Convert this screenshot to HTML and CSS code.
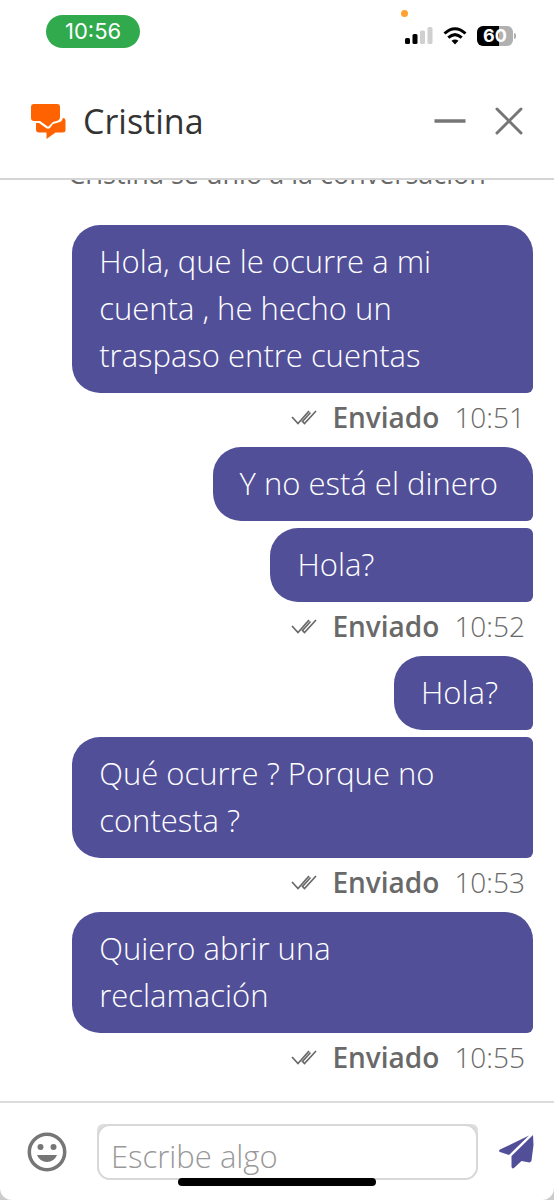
FILE: index.html
```html
<!DOCTYPE html>
<html lang="es">
<head>
<meta charset="utf-8">
<meta name="viewport" content="width=device-width, initial-scale=1">
<title>Chat con Cristina</title>
<link rel="stylesheet" href="styles.css">
</head>
<body>
<svg class="defs" aria-hidden="true"><defs>
  <symbol id="sent" viewBox="0 0 26 18"><path d="M1 9L7 15.500L18 3M25 3L13.500 15.500L11.500 13.500L19.500 4.500" fill="none" stroke="currentColor" stroke-width="1.700"/></symbol>
</defs></svg>
<div class="status-bar">
  <time class="clock">10:56</time>
  <div class="indicators">
    <span class="privacy-dot"></span>
    <svg width="28" height="18" viewBox="0 0 28 18" role="img" aria-label="Cobertura"><rect x="0" y="11" width="5" height="6" rx="1.5"/><rect x="7.500" y="7" width="5" height="10" rx="1.500"/><rect x="15" y="3.500" width="5" height="13.500" rx="1.500" fill="#d0d0d0"/><rect x="22.500" y="0" width="5" height="17" rx="1.500" fill="#d0d0d0"/></svg>
    <svg width="24" height="18" viewBox="0 0 24 18" role="img" aria-label="Wi-Fi"><g fill="none" stroke="#000" stroke-width="3"><path d="M1.500 6.500Q12-3 22.500 6.500"/><path d="M5.300 10.700Q12 4.600 18.700 10.700"/></g><path d="M8.500 13.800Q12 11 15.500 13.800L12 17.500z"/></svg>
    <span class="battery">60</span>
  </div>
</div>
<main class="chat">
  <header class="header">
    <svg width="36" height="36" viewBox="0 0 36 36" fill="#ff6200" aria-hidden="true"><path d="M4 1h23q3 0 3 3v10q0 3-2 3.500L23 19l-4 4q-1 1-2 0l-7-5H4q-3 0-3-3V4q0-3 3-3z"/><path d="M6 20h3l7 5q2 1.500 4 0l3-4 7-2q2-1 3-4 2.500 0 2.500 3v9q0 2.500-3 2.500h-7l-9 6.500v-6.500H9q-3 0-3-3z"/></svg>
    <h1 class="name">Cristina</h1>
    <button class="icon-button" aria-label="Minimizar"><svg width="32" height="32" viewBox="0 0 32 32"><path d="M0.500 16h31" stroke="#767676" stroke-width="3.500"/></svg></button>
    <button class="icon-button" aria-label="Cerrar"><svg width="32" height="32" viewBox="0 0 32 32"><path d="M4 4l24 24M28 4L4 28" stroke="#767676" stroke-width="3" stroke-linecap="round"/></svg></button>
  </header>
  <section class="messages" aria-label="Mensajes">
    <p class="notice">Cristina se unió a la conversación</p>
    <div class="group wide">
      <p class="bubble">Hola, que le ocurre a mi<br>cuenta , he hecho un<br>traspaso entre cuentas</p>
      <p class="receipt"><svg width="26" height="18"><use href="#sent"/></svg><strong>Enviado</strong><time>10:51</time></p>
    </div>
    <div class="group"><p class="bubble">Y no está el dinero</p></div>
    <div class="group">
      <p class="bubble joined">Hola?</p>
      <p class="receipt"><svg width="26" height="18"><use href="#sent"/></svg><strong>Enviado</strong><time>10:52</time></p>
    </div>
    <div class="group"><p class="bubble">Hola?</p></div>
    <div class="group wide">
      <p class="bubble joined">Qué ocurre ? Porque no<br>contesta ?</p>
      <p class="receipt"><svg width="26" height="18"><use href="#sent"/></svg><strong>Enviado</strong><time>10:53</time></p>
    </div>
    <div class="group wide">
      <p class="bubble">Quiero abrir una<br>reclamación</p>
      <p class="receipt"><svg width="26" height="18"><use href="#sent"/></svg><strong>Enviado</strong><time>10:55</time></p>
    </div>
  </section>
  <form class="composer">
    <button class="icon-button" type="button" aria-label="Emojis"><svg width="40" height="40" viewBox="0 0 40 40" fill="#767676"><circle cx="20" cy="20" r="17.700" fill="none" stroke="#767676" stroke-width="3.500"/><circle cx="13.500" cy="15" r="3"/><circle cx="26.500" cy="15" r="3"/><path d="M10 23h20q-3 7-10 7t-10-7z"/></svg></button>
    <div class="field-frame"><input class="field" type="text" placeholder="Escribe algo" aria-label="Mensaje"></div>
    <button class="icon-button" type="submit" aria-label="Enviar"><svg width="36" height="34" viewBox="0 0 36 34" fill="#524f99"><path d="M31 .5L2 14.500q-2 1.500 0 2.500l9 3z"/><path d="M35 0L13.500 21v11q1 2.500 3 .5l7-6.500 8 1.500q1.500-.5 2-2L35.500 10z"/></svg></button>
  </form>
</main>
<div class="home-indicator"></div>
</body>
</html>
```
FILE: styles.css
```css
* { box-sizing: border-box; }
body {
  margin: 0;
  height: 100vh;
  display: flex;
  flex-direction: column;
  background: #ccc;
  color: #333;
  font-family: "Open Sans", "Noto Sans", sans-serif;
}
p, h1 { margin: 0; }
svg { display: block; flex: none; }
.defs { position: absolute; width: 0; height: 0; }
.status-bar {
  flex: none;
  height: 68px;
  padding: 15px 41px 0 46px;
  display: flex;
  justify-content: space-between;
  align-items: flex-start;
  background: #fff;
}
.clock {
  padding: 0 19px;
  border-radius: 17px;
  background: #30aa4d;
  color: #fff;
  font: 400 22px/33px Inter, sans-serif;
}
.indicators {
  position: relative;
  display: flex;
  align-items: center;
  gap: 10px;
  padding-top: 11px;
}
.privacy-dot {
  position: absolute;
  left: -4px;
  top: -5px;
  width: 7px;
  height: 7px;
  border-radius: 50%;
  background: #ffa230;
}
.battery {
  position: relative;
  width: 36px;
  border-radius: 6px;
  background: linear-gradient(90deg, #000 60%, #b0b0b0 60%);
  color: #fff;
  font: 700 18px/20px Inter, sans-serif;
  text-align: center;
}
.battery::after {
  content: "";
  position: absolute;
  left: 37px;
  top: 7px;
  width: 2px;
  height: 6px;
  border-radius: 0 2px 2px 0;
  background: #b0b0b0;
}
.chat {
  flex: 1;
  min-height: 0;
  display: flex;
  flex-direction: column;
  border-radius: 0 0 12px 12px;
  background: #fff;
}
.header {
  flex: none;
  height: 112px;
  padding: 0 29px 4px 30px;
  display: flex;
  align-items: center;
  border-bottom: 2px solid #d5d5d5;
}
.name {
  flex: 1;
  padding-left: 17px;
  font: 500 34px/44px "Open Sans", sans-serif;
}
.icon-button {
  padding: 0;
  border: 0;
  background: none;
}
.icon-button + .icon-button { margin-left: 27px; }
.messages {
  flex: 1;
  min-height: 0;
  overflow: hidden;
  display: flex;
  flex-direction: column;
  justify-content: flex-end;
  align-items: flex-end;
  gap: 7px;
  padding: 0 21px 21px;
}
.notice {
  align-self: center;
  padding-bottom: 26px;
  color: #696969;
  font-size: 27px;
  font-weight: 400;
  line-height: 36px;
}
.group { max-width: 90%; }
.group.wide { width: 90%; }
.bubble {
  padding: 13px 35px 14px 27px;
  border-radius: 28px 28px 6px 28px;
  background: #524f99;
  color: #fff;
  font-size: 31px;
  font-weight: 300;
  line-height: 47px;
}
.bubble.joined { border-top-right-radius: 6px; }
.receipt {
  display: flex;
  justify-content: flex-end;
  align-items: center;
  height: 47px;
  padding: 0 8px 0 21px;
  color: #696969;
  font-size: 28px;
}
.receipt strong { padding: 0 15px; font-weight: 600; }
.receipt time { font-weight: 300; }
.composer {
  flex: none;
  height: 99px;
  padding: 20px 20px 20px 27px;
  display: flex;
  align-items: center;
  border-top: 2px solid #dcdcdc;
}
.field-frame {
  flex: 1;
  min-width: 0;
  height: 56px;
  margin: 0 20px 0 30px;
  border-radius: 6px 6px 14px 14px;
  background: #dedede;
}
.field {
  display: block;
  width: 100%;
  height: 100%;
  padding: 8px 12px 0;
  border: 2px solid #d8d8d8;
  border-radius: 13px;
  background: #fff;
  font: 300 31px/40px "Open Sans", sans-serif;
}
.field::placeholder { color: #999; }
.home-indicator {
  position: absolute;
  left: 50%;
  bottom: 14px;
  width: 198px;
  height: 8px;
  margin-left: -99px;
  border-radius: 4px;
  background: #000;
}
```
